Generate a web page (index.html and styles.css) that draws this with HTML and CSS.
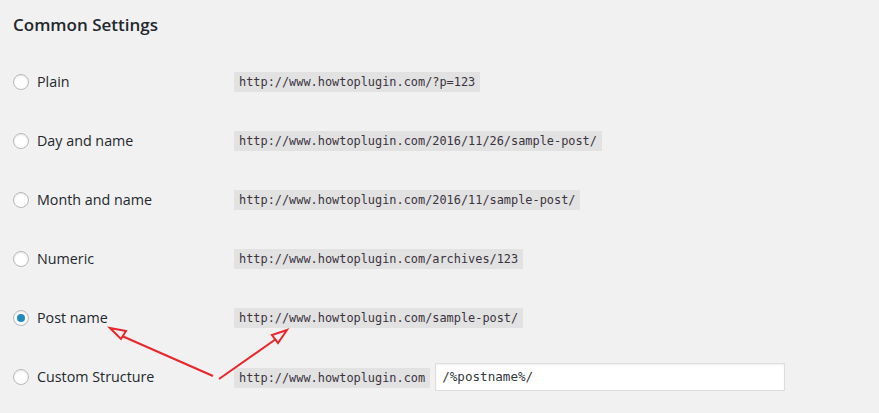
FILE: index.html
```html
<!DOCTYPE html>
<html>
<head>
<meta charset="utf-8">
<link rel="stylesheet" href="styles.css">
</head>
<body>
<div class="wrap">
  <h2 class="title">Common Settings</h2>
  <div class="rows">
    <div class="row">
      <label class="opt"><input type="radio" name="p"><span>Plain</span></label>
      <code>http://www.howtoplugin.com/?p=123</code>
    </div>
    <div class="row">
      <label class="opt"><input type="radio" name="p"><span>Day and name</span></label>
      <code>http://www.howtoplugin.com/2016/11/26/sample-post/</code>
    </div>
    <div class="row">
      <label class="opt"><input type="radio" name="p"><span>Month and name</span></label>
      <code>http://www.howtoplugin.com/2016/11/sample-post/</code>
    </div>
    <div class="row">
      <label class="opt"><input type="radio" name="p"><span>Numeric</span></label>
      <code>http://www.howtoplugin.com/archives/123</code>
    </div>
    <div class="row">
      <label class="opt"><input type="radio" name="p" checked><span>Post name</span></label>
      <code>http://www.howtoplugin.com/sample-post/</code>
    </div>
    <div class="row">
      <label class="opt"><input type="radio" name="p"><span>Custom Structure</span></label>
      <div class="custom">
        <code>http://www.howtoplugin.com</code>
        <input class="struct" type="text" value="/%postname%/">
      </div>
    </div>
  </div>
  <svg class="arrows" width="879" height="413" viewBox="0 0 879 413">
    <g fill="none" stroke="#e8262b" stroke-width="2" stroke-linejoin="miter">
      <line x1="213" y1="376" x2="122" y2="336"/>
      <polygon points="110,328 126,331 121,339"/>
      <line x1="219" y1="379" x2="276" y2="339"/>
      <polygon points="287,330 272,335 278,343"/>
    </g>
  </svg>
</div>
</body>
</html>
```
FILE: styles.css
```css
html, body {
  margin: 0;
  padding: 0;
  background: #f1f1f1;
}
body {
  font-family: "Open Sans", "Liberation Sans", sans-serif;
  color: #23282d;
  font-size: 14.3px;
  width: 879px;
  height: 413px;
  overflow: hidden;
}
.wrap {
  position: relative;
  padding: 0 13px;
}
.title {
  margin: 0;
  padding-top: 13px;
  font-size: 17px;
  font-weight: 600;
  line-height: 24px;
  color: #23282d;
}
.rows {
  margin-top: 15px;
}
.row {
  display: flex;
  align-items: center;
  height: 59px;
}
.opt {
  width: 221px;
  display: flex;
  align-items: center;
  gap: 8px;
  flex: none;
}
.opt input {
  -webkit-appearance: none;
  appearance: none;
  margin: 0;
  width: 16px;
  height: 16px;
  border: 1px solid #b4b9be;
  border-radius: 50%;
  background: #fff;
  box-shadow: inset 0 1px 2px rgba(0,0,0,0.1);
  box-sizing: border-box;
  display: grid;
  place-items: center;
}
.opt input:checked::before {
  content: "";
  width: 8px;
  height: 8px;
  border-radius: 50%;
  background: #1e8cbe;
}
code {
  font-family: "DejaVu Sans Mono", "Liberation Mono", monospace;
  font-size: 11.9px;
  line-height: 20px;
  padding: 0 5px;
  background: #e2e2e2;
  color: #3a3340;
  display: inline-block;
}
.custom {
  display: flex;
  align-items: center;
  gap: 5px;
}
.custom code {
  margin-top: 3px;
}
.struct {
  width: 350px;
  height: 28px;
  box-sizing: border-box;
  border: 1px solid #ddd;
  box-shadow: inset 0 1px 2px rgba(0,0,0,0.07);
  background: #fff;
  padding: 0 6px;
  font-family: "DejaVu Sans Mono", "Liberation Mono", monospace;
  font-size: 12.6px;
  color: #32373c;
  margin: 0;
}
.arrows {
  position: absolute;
  left: 0;
  top: 0;
  pointer-events: none;
}
```
